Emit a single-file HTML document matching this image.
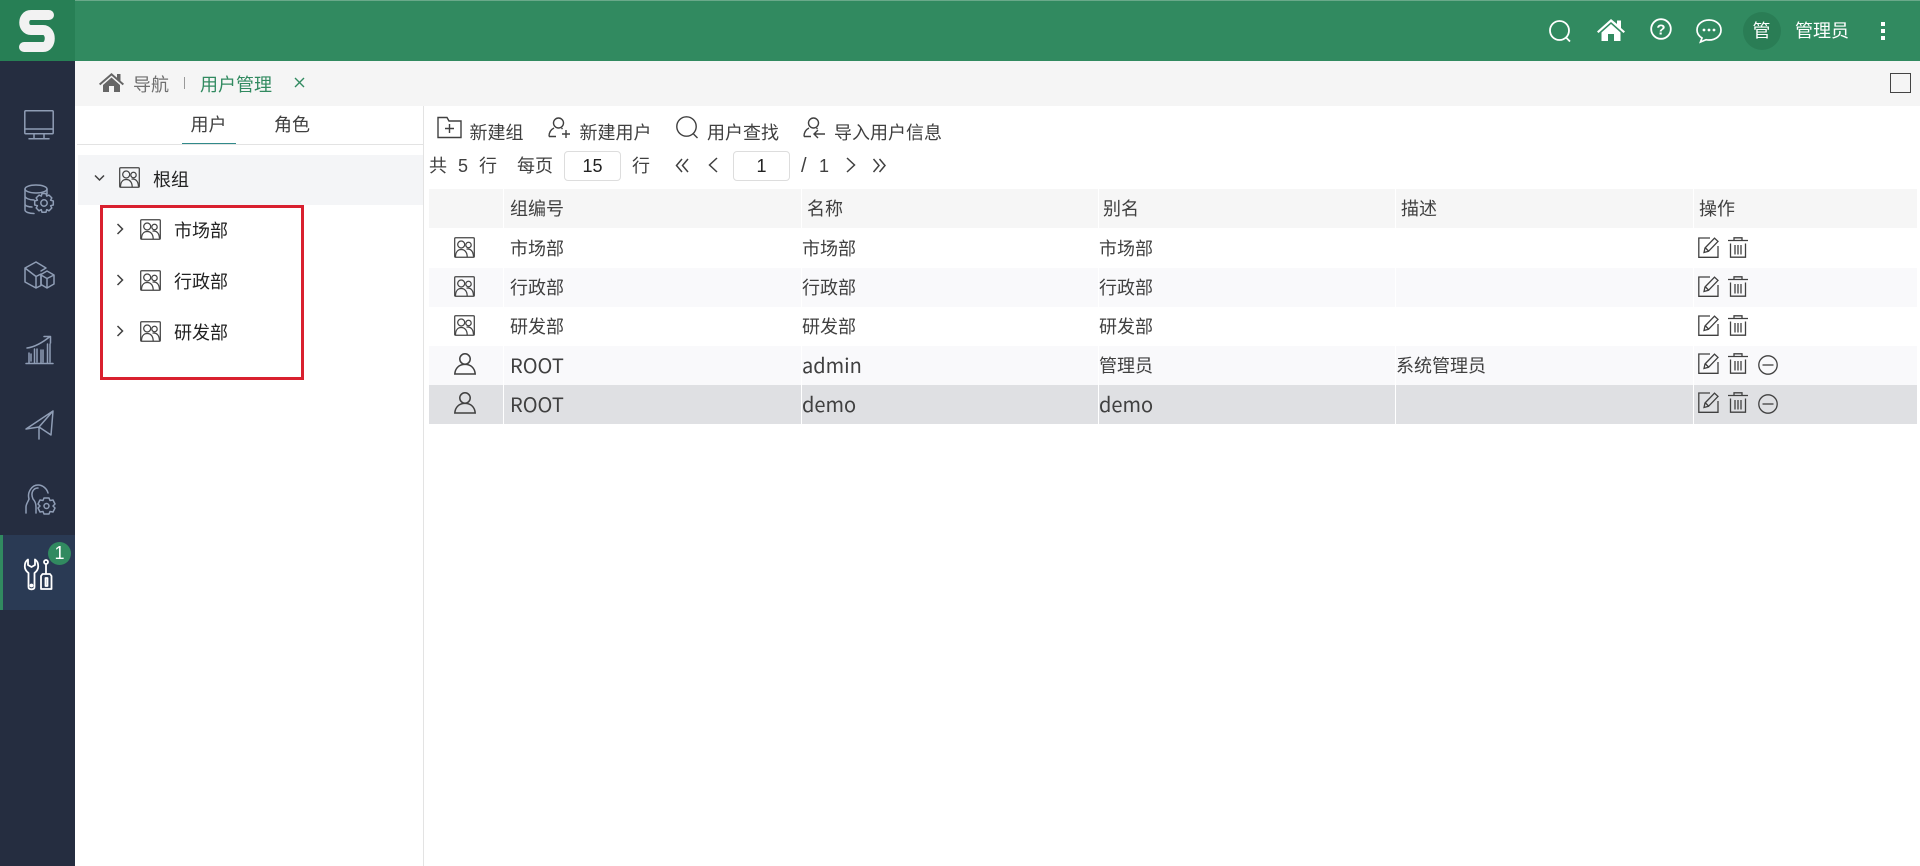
<!DOCTYPE html>
<html lang="zh-CN">
<head>
<meta charset="utf-8">
<title>用户管理</title>
<style>
html,body{margin:0;padding:0;width:1920px;height:866px;overflow:hidden;background:#fff;}
body{position:relative;font-family:"Liberation Sans","Noto Sans CJK SC",sans-serif;color:#404040;font-size:18px;}
.b{position:absolute;}
.t{position:absolute;white-space:nowrap;line-height:20px;height:20px;font-size:18px;font-weight:400;margin-top:1px;}
.L{font-family:"Noto Sans CJK SC",sans-serif;font-size:20px;margin-top:0;}
svg{position:absolute;overflow:visible;fill:none;}
.r{position:absolute;left:429px;width:1488px;height:39px;}
.dv{position:absolute;top:189px;height:235px;width:1px;background:#fff;}
.ic{stroke:#404040;stroke-width:1.4;}
.sd{stroke:#8f9db5;stroke-width:1.5;stroke-linejoin:round;stroke-linecap:round;}
</style>
</head>
<body>
<svg width="0" height="0" style="position:absolute">
<defs>
<symbol id="grp" viewBox="0 0 21 21"><g fill="none" stroke="#444" stroke-width="1.25"><rect x=".7" y=".7" width="19.600" height="19.600" rx="1"/><circle cx="7.2" cy="7.5" r="3.500"/><circle cx="14.500" cy="8" r="2.700"/><path d="M1.500 20c0-4.800 2.200-7.500 5.700-7.500s6 2.700 6 7.500M12.500 12.200c3.800-.8 6.800 1.800 7 7.300"/></g></symbol>
<symbol id="usr" viewBox="0 0 22 22"><g fill="none" stroke="#404040" stroke-width="1.5"><circle cx="11" cy="6" r="5.200"/><path d="M.8 21c.4-5.500 4-9.600 10.200-9.600s9.800 4.100 10.200 9.600z"/></g></symbol>
<symbol id="edt" viewBox="0 0 21 21"><g fill="none" stroke="#404040" stroke-width="1.300"><path d="M12 1H.8v19.300H20V9"/><path d="M6 15.500l1-4.500L16.500 1.200l3.500 3.200L10.500 14.300z"/><path d="M7.500 11l3 3"/></g></symbol>
<symbol id="trs" viewBox="0 0 20 21"><g fill="none" stroke="#404040" stroke-width="1.300"><path d="M0 3.500h20M6 3.500V.8h8v2.700M2.500 6.500v13.700h15V6.500M7 8v9.500M10 8v9.500M13 8v9.500"/></g></symbol>
<symbol id="min" viewBox="0 0 20 20"><g fill="none" stroke="#404040" stroke-width="1.300"><circle cx="10" cy="10" r="9.200"/><path d="M4.500 10h11"/></g></symbol>
<symbol id="chr" viewBox="0 0 8 12"><path d="M1.500 1l5 5-5 5" fill="none" stroke="#404040" stroke-width="1.500"/></symbol>
</defs>
</svg>

<!-- header -->
<div class="b" style="left:0;top:0;width:1920px;height:61px;background:#318a60;border-top:1px solid #6aa98a;box-sizing:border-box;"></div>
<div class="b" style="left:0;top:0;width:75px;height:61px;background:#277f55;"></div>
<svg style="left:0;top:0" width="75" height="61"><path d="M49 15H31c-9 0-9 15 0 15h12c9 0 9 17 0 17H24" stroke="#f2f2f2" stroke-width="10" stroke-linecap="round" stroke-linejoin="round"/></svg>

<svg style="left:1549px;top:20px" width="24" height="24"><circle cx="10.500" cy="10.500" r="9.500" stroke="#fff" stroke-width="1.800"/><path d="M17.500 18l3.500 3.500" stroke="#fff" stroke-width="1.800"/></svg>
<svg style="left:1597px;top:19px" width="28" height="22"><path d="M14 0L0 12.500l1.500 1.500L14 3l12.500 11 1.500-1.500-4-3.500V1.500h-4V5z" fill="#fff"/><path d="M4.500 13.500L14 5l9.500 8.500V22H17v-7h-6v7H4.500z" fill="#fff"/></svg>
<svg style="left:1650px;top:18px" width="22" height="22"><circle cx="11" cy="11" r="9.800" stroke="#fff" stroke-width="1.800"/><text x="11" y="16.500" text-anchor="middle" font-size="15" font-weight="700" fill="#fff" font-family="Liberation Sans">?</text></svg>
<svg style="left:1696px;top:19px" width="26" height="24"><path d="M13 1c6.800 0 12 4.200 12 10s-5.200 10-12 10c-1 0-2-.1-3-.3L4.500 23l1.500-4C3 17.200 1 14.300 1 11 1 5.200 6.200 1 13 1z" stroke="#fff" stroke-width="1.700"/><circle cx="8" cy="11" r="1.400" fill="#fff"/><circle cx="13" cy="11" r="1.400" fill="#fff"/><circle cx="18" cy="11" r="1.400" fill="#fff"/></svg>
<div class="b" style="left:1743px;top:12px;width:38px;height:38px;border-radius:50%;background:#2a7d55;"></div>
<div class="t" style="left:1752.500px;top:20px;color:#fff;">管</div>
<div class="t" style="left:1795px;top:20px;color:#fff;">管理员</div>
<div class="b" style="left:1881px;top:22px;width:4px;height:4px;background:#fff;"></div>
<div class="b" style="left:1881px;top:29px;width:4px;height:4px;background:#fff;"></div>
<div class="b" style="left:1881px;top:36px;width:4px;height:4px;background:#fff;"></div>

<!-- sidebar -->
<div class="b" style="left:0;top:61px;width:75px;height:805px;background:#252d40;"></div>
<div class="b" style="left:0;top:535px;width:75px;height:75px;background:#2a3a54;"></div>
<div class="b" style="left:0;top:535px;width:3px;height:75px;background:#318a60;"></div>

<svg class="sd" style="left:24px;top:110px" width="30" height="30"><rect x=".8" y=".8" width="28.400" height="23" rx="1"/><path d="M.8 19h28.400M10 24v4M20 24v4M5 28.700h20"/></svg>
<svg class="sd" style="left:24px;top:184px" width="31" height="31"><ellipse cx="12" cy="5" rx="11" ry="4"/><path d="M1 5v21c0 2 4 3.500 9 3.500M23 5v5M1 12c0 2 4 4 9 4M1 20c0 2 4 3 7 3"/><circle cx="20" cy="19" r="3.200"/><path d="M18 9.500h4l.7 2.600 2.300-1 2.800 2.800-1.200 2.300 2.700.8v4l-2.700.7 1.200 2.300-2.800 2.800-2.300-1.200-.7 2.700h-4l-.7-2.700-2.300 1.200-2.800-2.800 1.200-2.300-2.700-.7v-4l2.700-.8-1.200-2.300 2.800-2.800 2.300 1z"/></svg>
<svg class="sd" style="left:24px;top:261px" width="31" height="28"><path d="M12 1L1 7v14l11 6 5-2.500V13l-5 2.500L1 7M12 15.500V27M12 1l10 6-5 3"/><path d="M23 10l7 4v9l-7 4-6-3.500V13.500zM17 14l6 3.500 7-3.500M23 17.500V27"/></svg>
<svg class="sd" style="left:25px;top:335px" width="29" height="30"><path d="M1 28.500h27M4 28V18M9.500 28V14M16 28V15M22.500 28V9M6 26V19M12 27V14M18 27V15M25 27V9"/><path d="M2 13C10 12 17 8 25 1.500M19 1.500h6.500V8"/></svg>
<svg class="sd" style="left:25px;top:410px" width="29" height="30"><path d="M1 19L28 1l-2 24-12-8zM14 17l14-16M14 17v12"/></svg>
<svg class="sd" style="left:24px;top:484px" width="32" height="31"><path d="M2 29v-6c0-3 2-5 3-8C3 8 8 1 14 1c5 0 9 4 10 8M12 29v-6c0-3-1-6-3-8M9 15C6 8 10 4 14 4"/><circle cx="22.500" cy="22" r="2.500"/><path d="M20 14h5l1 2.500 3-.5 2 4-2 2 2 2-2 4-3-.5-1 2.500h-5l-1-2.500-3 .5-2-4 2-2-2-2 2-4 3 .5z"/></svg>
<svg style="left:24px;top:559px;stroke:#fff;stroke-width:1.800;stroke-linejoin:round" width="30" height="31"><path d="M4 0.500C1.500 2 .8 5 .8 7.500c0 3 1.700 5 3.700 6.500v14c0 1.500 1 2.300 3 2.300s3-.8 3-2.300V14c2-1.500 3.700-3.500 3.700-6.500 0-2.500-.7-5.500-3.200-7V6l-3.500 2L4 6z"/><circle cx="7.500" cy="26.500" r="1" fill="#fff"/><circle cx="22" cy="3" r="2"/><path d="M22 5v10M18.500 15h7.500l1.500 2v13h-10.500V17zM21.500 19v8h2v-8z"/></svg>
<div class="b" style="left:48px;top:542px;width:23px;height:23px;border-radius:50%;background:#318a60;"></div>
<div class="t" style="left:48px;top:542px;width:23px;text-align:center;color:#fff;">1</div>

<!-- breadcrumb -->
<div class="b" style="left:75px;top:61px;width:1845px;height:45px;background:#f5f5f5;"></div>
<svg style="left:99px;top:73px" width="25" height="19"><path d="M12.500 0L0 10.800l1.300 1.400L12.500 2.600l11.200 9.600 1.300-1.400-3.500-3V1h-3.500v3.800z" fill="#666"/><path d="M4 12l8.500-7.500L21 12v7h-6v-6h-5v6H4z" fill="#666"/></svg>
<div class="t" style="left:133px;top:74px;color:#6f6f6f;">导航</div>
<div class="b" style="left:184px;top:77px;width:1px;height:12px;background:#999;"></div>
<div class="t" style="left:200px;top:74px;color:#318a60;">用户管理</div>
<svg style="left:294px;top:77px" width="11" height="11"><path d="M1 1l9 9M10 1l-9 9" stroke="#318a60" stroke-width="1.400"/></svg>
<div class="b" style="left:1890px;top:73px;width:21px;height:20px;box-sizing:border-box;border:1.500px solid #444;"></div>

<!-- left panel -->
<div class="b" style="left:423px;top:106px;width:1px;height:760px;background:#e3e3e3;"></div>
<div class="t" style="left:190.500px;top:114px;">用户</div>
<div class="t" style="left:274px;top:114px;">角色</div>
<div class="b" style="left:77px;top:144px;width:346px;height:1px;background:#e3e3e3;"></div>
<div class="b" style="left:182px;top:143px;width:54px;height:1px;background:#318a8a;"></div>

<div class="b" style="left:78px;top:155px;width:345px;height:50px;background:#f4f5f7;"></div>
<svg style="left:94px;top:174px" width="11" height="8"><path d="M1 1.500l4.500 4.500 4.500-4.500" stroke="#404040" stroke-width="1.500"/></svg>
<svg style="left:119px;top:167px" width="21" height="21"><use href="#grp"/></svg>
<div class="t" style="left:153px;top:169px;color:#222;">根组</div>

<div class="b" style="left:100px;top:205px;width:204px;height:175px;box-sizing:border-box;border:3px solid #d9202f;"></div>
<svg style="left:116px;top:223px" width="8" height="12"><use href="#chr"/></svg>
<svg style="left:140px;top:219px" width="21" height="21"><use href="#grp"/></svg>
<div class="t" style="left:174px;top:220px;color:#222;">市场部</div>
<svg style="left:116px;top:274px" width="8" height="12"><use href="#chr"/></svg>
<svg style="left:140px;top:270px" width="21" height="21"><use href="#grp"/></svg>
<div class="t" style="left:174px;top:271px;color:#222;">行政部</div>
<svg style="left:116px;top:325px" width="8" height="12"><use href="#chr"/></svg>
<svg style="left:140px;top:321px" width="21" height="21"><use href="#grp"/></svg>
<div class="t" style="left:174px;top:322px;color:#222;">研发部</div>

<!-- toolbar -->
<svg class="ic" style="left:437px;top:116px" width="25" height="23"><path d="M1 2v19.500h23V5H12L10 1.500H1z"/><path d="M12.500 8v9M8 12.500h9"/></svg>
<div class="t" style="left:469.500px;top:122px;">新建组</div>
<svg class="ic" style="left:548px;top:117px" width="23" height="22"><circle cx="10.500" cy="6" r="5"/><path d="M1 19.500c0-4 2-7 5-8.500M8 19.500H1M13.500 11l1 1M14 17h8M18 13v8"/></svg>
<div class="t" style="left:579.500px;top:122px;">新建用户</div>
<svg class="ic" style="left:676px;top:116px" width="23" height="23"><circle cx="10.500" cy="10.500" r="9.700"/><path d="M17.500 18l4 4"/></svg>
<div class="t" style="left:707px;top:122px;">用户查找</div>
<svg class="ic" style="left:803px;top:117px" width="23" height="22"><circle cx="10.500" cy="6" r="5"/><path d="M1 19.500c0-4 2-7 5-8.500M8 19.500H1M13.500 11l1 1M11 17h11M15 13l-4 4 4 4"/></svg>
<div class="t" style="left:834px;top:122px;">导入用户信息</div>

<!-- pagination -->
<div class="t" style="left:429px;top:155px;">共</div>
<div class="t" style="left:458px;top:155px;">5</div>
<div class="t" style="left:479px;top:155px;">行</div>
<div class="t" style="left:517px;top:155px;">每页</div>
<div class="b" style="left:564px;top:151px;width:57px;height:30px;box-sizing:border-box;border:1px solid #ddd;border-radius:4px;"></div>
<div class="t" style="left:564px;top:155px;width:57px;text-align:center;color:#222;">15</div>
<div class="t" style="left:632px;top:155px;">行</div>
<svg style="left:675px;top:158px" width="15" height="15"><path d="M7 1L1.500 7.500 7 14M13 1L7.500 7.500 13 14" stroke="#404040" stroke-width="1.500"/></svg>
<svg style="left:708px;top:157px" width="10" height="16"><path d="M9 1L1.500 8 9 15" stroke="#404040" stroke-width="1.500"/></svg>
<div class="b" style="left:733px;top:151px;width:57px;height:30px;box-sizing:border-box;border:1px solid #ddd;border-radius:4px;"></div>
<div class="t" style="left:733px;top:155px;width:57px;text-align:center;color:#222;">1</div>
<div class="t" style="left:801px;top:155px;font-size:20px;">/</div>
<div class="t" style="left:819px;top:155px;">1</div>
<svg style="left:846px;top:157px" width="10" height="16"><path d="M1 1l7.500 7L1 15" stroke="#404040" stroke-width="1.500"/></svg>
<svg style="left:872px;top:158px" width="15" height="15"><path d="M1.500 1L7 7.500 1.500 14M7.500 1L13 7.500 7.500 14" stroke="#404040" stroke-width="1.500"/></svg>

<!-- table -->
<div class="r" style="top:189px;background:#f6f6f6;"></div>
<div class="r" style="top:268px;background:#f9f9fb;"></div>
<div class="r" style="top:346px;background:#f9f9fb;"></div>
<div class="r" style="top:385px;background:#dfe0e3;"></div>
<div class="dv" style="left:503px;"></div>
<div class="dv" style="left:801px;"></div>
<div class="dv" style="left:1098px;"></div>
<div class="dv" style="left:1395px;"></div>
<div class="dv" style="left:1693px;"></div>

<div class="t" style="left:510px;top:198px;">组编号</div>
<div class="t" style="left:807px;top:198px;">名称</div>
<div class="t" style="left:1103px;top:198px;">别名</div>
<div class="t" style="left:1401px;top:198px;">描述</div>
<div class="t" style="left:1699px;top:198px;">操作</div>

<svg style="left:454px;top:237px" width="21" height="21"><use href="#grp"/></svg>
<div class="t" style="left:510px;top:238px;">市场部</div>
<div class="t" style="left:802px;top:238px;">市场部</div>
<div class="t" style="left:1099px;top:238px;">市场部</div>
<svg style="left:1698px;top:237px" width="21" height="21"><use href="#edt"/></svg>
<svg style="left:1728px;top:237px" width="20" height="21"><use href="#trs"/></svg>

<svg style="left:454px;top:276px" width="21" height="21"><use href="#grp"/></svg>
<div class="t" style="left:510px;top:277px;">行政部</div>
<div class="t" style="left:802px;top:277px;">行政部</div>
<div class="t" style="left:1099px;top:277px;">行政部</div>
<svg style="left:1698px;top:276px" width="21" height="21"><use href="#edt"/></svg>
<svg style="left:1728px;top:276px" width="20" height="21"><use href="#trs"/></svg>

<svg style="left:454px;top:315px" width="21" height="21"><use href="#grp"/></svg>
<div class="t" style="left:510px;top:316px;">研发部</div>
<div class="t" style="left:802px;top:316px;">研发部</div>
<div class="t" style="left:1099px;top:316px;">研发部</div>
<svg style="left:1698px;top:315px" width="21" height="21"><use href="#edt"/></svg>
<svg style="left:1728px;top:315px" width="20" height="21"><use href="#trs"/></svg>

<svg style="left:454px;top:353px" width="22" height="22"><use href="#usr"/></svg>
<div class="t L" style="left:510px;top:355px;">ROOT</div>
<div class="t L" style="left:802px;top:355px;">admin</div>
<div class="t" style="left:1099px;top:355px;">管理员</div>
<div class="t" style="left:1396px;top:355px;">系统管理员</div>
<svg style="left:1698px;top:353px" width="21" height="21"><use href="#edt"/></svg>
<svg style="left:1728px;top:353px" width="20" height="21"><use href="#trs"/></svg>
<svg style="left:1758px;top:355px" width="20" height="20"><use href="#min"/></svg>

<svg style="left:454px;top:392px" width="22" height="22"><use href="#usr"/></svg>
<div class="t L" style="left:510px;top:394px;">ROOT</div>
<div class="t L" style="left:802px;top:394px;">demo</div>
<div class="t L" style="left:1099px;top:394px;">demo</div>
<svg style="left:1698px;top:392px" width="21" height="21"><use href="#edt"/></svg>
<svg style="left:1728px;top:392px" width="20" height="21"><use href="#trs"/></svg>
<svg style="left:1758px;top:394px" width="20" height="20"><use href="#min"/></svg>
</body>
</html>
